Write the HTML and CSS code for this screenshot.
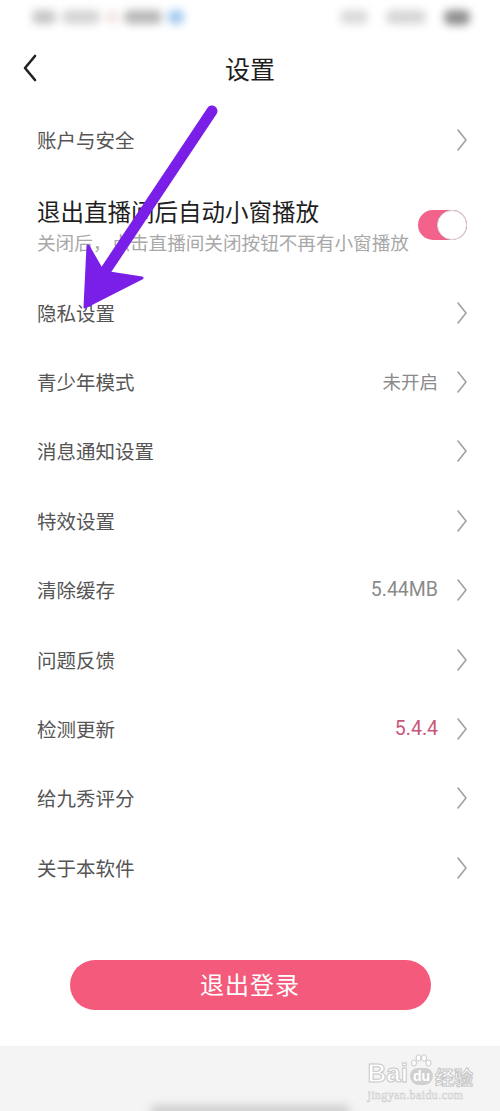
FILE: index.html
```html
<!DOCTYPE html>
<html lang="zh">
<head>
<meta charset="utf-8">
<link rel="stylesheet" href="styles.css">
</head>
<body>
<div class="screen">
  <div class="status">
    <div class="blobs left">
      <span class="b b1"></span><span class="b b2"></span><span class="b b3"></span><span class="b b4"></span><span class="b b5"></span>
    </div>
    <div class="blobs right">
      <span class="b b6"></span><span class="b b7"></span><span class="b b8"></span>
    </div>
  </div>
  <header class="header">
    <svg class="back" width="18" height="28" viewBox="0 0 18 28"><path d="M14 2 L4 14 L14 26" fill="none" stroke="#222" stroke-width="2.6" stroke-linecap="round" stroke-linejoin="round"/></svg>
    <h1 class="title">设置</h1>
  </header>

  <div class="list">
    <div class="row"><span class="label">账户与安全</span><span class="right"><svg class="chev" viewBox="0 0 12 22"><path d="M2 1 L10 11 L2 21" /></svg></span></div>
    <div class="row toggle-row">
      <div class="tcol">
        <span class="ttitle">退出直播间后自动小窗播放</span>
        <span class="tsub">关闭后，点击直播间关闭按钮不再有小窗播放</span>
      </div>
      <span class="switch"><span class="knob"></span></span>
    </div>
    <div class="row"><span class="label">隐私设置</span><span class="right"><svg class="chev" viewBox="0 0 12 22"><path d="M2 1 L10 11 L2 21" /></svg></span></div>
    <div class="row"><span class="label">青少年模式</span><span class="right"><span class="val">未开启</span><svg class="chev" viewBox="0 0 12 22"><path d="M2 1 L10 11 L2 21" /></svg></span></div>
    <div class="row"><span class="label">消息通知设置</span><span class="right"><svg class="chev" viewBox="0 0 12 22"><path d="M2 1 L10 11 L2 21" /></svg></span></div>
    <div class="row"><span class="label">特效设置</span><span class="right"><svg class="chev" viewBox="0 0 12 22"><path d="M2 1 L10 11 L2 21" /></svg></span></div>
    <div class="row"><span class="label">清除缓存</span><span class="right"><span class="val num">5.44MB</span><svg class="chev" viewBox="0 0 12 22"><path d="M2 1 L10 11 L2 21" /></svg></span></div>
    <div class="row"><span class="label">问题反馈</span><span class="right"><svg class="chev" viewBox="0 0 12 22"><path d="M2 1 L10 11 L2 21" /></svg></span></div>
    <div class="row"><span class="label">检测更新</span><span class="right"><span class="val num pink">5.4.4</span><svg class="chev" viewBox="0 0 12 22"><path d="M2 1 L10 11 L2 21" /></svg></span></div>
    <div class="row"><span class="label">给九秀评分</span><span class="right"><svg class="chev" viewBox="0 0 12 22"><path d="M2 1 L10 11 L2 21" /></svg></span></div>
    <div class="row"><span class="label">关于本软件</span><span class="right"><svg class="chev" viewBox="0 0 12 22"><path d="M2 1 L10 11 L2 21" /></svg></span></div>
  </div>

  <div class="btn-wrap"><button class="logout">退出登录</button></div>

  <footer class="footer">
    <div class="watermark">
      <div class="wm-top"><span class="wm-bai">Bai</span><span class="wm-du"><svg class="paw" width="22" height="14" viewBox="0 0 22 14"><ellipse cx="4" cy="9" rx="2.5" ry="3" /><ellipse cx="8.5" cy="4" rx="2.5" ry="3.2" /><ellipse cx="14" cy="4" rx="2.5" ry="3.2" /><ellipse cx="18.5" cy="9" rx="2.5" ry="3" /></svg><span class="du">du</span></span><span class="wm-jy">经验</span></div>
      <div class="wm-url">jingyan.baidu.com</div>
    </div>
    <div class="homebar"></div>
  </footer>

  <svg class="arrow" width="500" height="1111" viewBox="0 0 500 1111">
    <line x1="212" y1="111" x2="102" y2="276" stroke="#7a1fe8" stroke-width="11" stroke-linecap="round"/>
    <polygon points="85,307 88,246 103,272 142,278" fill="#7a1fe8" stroke="#7a1fe8" stroke-width="3" stroke-linejoin="round"/>
  </svg>
</div>
</body>
</html>
```

FILE: styles.css
```css
* { box-sizing: border-box; }
html, body { margin: 0; padding: 0; }
body {
  background: #fff;
  font-family: "Noto Sans CJK SC", "Noto Sans", sans-serif;
  color: #333;
}
.screen {
  position: relative;
  width: 500px;
  height: 1111px;
  overflow: hidden;
  background: #fff;
  display: flex;
  flex-direction: column;
}
.status {
  height: 40px;
  display: flex;
  justify-content: space-between;
  align-items: center;
  padding: 0 30px 6px 32px;
}
.blobs { display: flex; align-items: center; gap: 6px; filter: blur(4px); }
.b { display: block; height: 14px; border-radius: 6px; background: #c8c8c8; }
.b1 { width: 24px; background: #c6c6c6; }
.b2 { width: 38px; background: #d4d4d4; }
.b3 { width: 12px; background: #f2e2e2; }
.b4 { width: 38px; background: #b8b8b8; }
.b5 { width: 16px; background: #9fc8f0; }
.b6 { width: 28px; background: #dadada; }
.b7 { width: 40px; background: #d6d6d6; }
.b8 { width: 26px; height: 15px; background: #8f8f8f; }

.header {
  height: 65px;
  display: flex;
  align-items: center;
  justify-content: center;
  position: relative;
}
.back { position: absolute; left: 21px; top: 14px; }
.title {
  margin: 0;
  font-size: 25px;
  font-weight: 400;
  color: #1e1e1e;
  line-height: 1;
  margin-top: -8px;
}
.list { display: flex; flex-direction: column; }
.row {
  height: 69.4px;
  display: flex;
  align-items: center;
  justify-content: space-between;
  padding: 0 32px 0 37px;
}
.label { font-size: 19.5px; color: #555; }
.right { display: flex; align-items: center; gap: 18px; }
.val { font-size: 18.5px; color: #8a8a8a; }
.num { font-family: "Roboto", "Liberation Sans", sans-serif; font-size: 19.5px; }
.pink { color: #c8557a; }
.chev { width: 12px; height: 22px; display: block; margin-top: 1px; }
.chev path { fill: none; stroke: #a0a0a0; stroke-width: 1.6; stroke-linecap: round; stroke-linejoin: round; }

.toggle-row { height: 103px; padding-right: 33px; }
.tcol { display: flex; flex-direction: column; gap: 6px; margin-top: -2px; }
.ttitle { font-size: 23.5px; color: #1f1f1f; line-height: 28px; }
.tsub { font-size: 18.6px; color: #a8a8a8; line-height: 22px; }
.switch {
  width: 49px;
  height: 30px;
  border-radius: 15px;
  background: #f2628a;
  position: relative;
  display: block;
  margin-top: -2px;
}
.knob {
  position: absolute;
  right: 0;
  top: 0;
  width: 30px;
  height: 30px;
  border-radius: 50%;
  background: #fff;
  border: 1px solid #d8d8d8;
  box-shadow: 0 0 1px rgba(0,0,0,0.15);
}

.btn-wrap {
  display: flex;
  justify-content: center;
  padding-top: 58px;
}
.logout {
  width: 361px;
  height: 50px;
  border: none;
  border-radius: 25px;
  background: #f45a7c;
  color: #fff;
  font-family: "Noto Sans CJK SC", sans-serif;
  font-size: 24px;
  letter-spacing: 1px;
  padding: 0 0 2px;
}
.footer {
  margin-top: auto;
  height: 65px;
  background: #f4f4f4;
  position: relative;
}
.watermark {
  position: absolute;
  right: 27px;
  top: 8px;
  display: flex;
  flex-direction: column;
  align-items: flex-start;
}
.wm-top { display: flex; align-items: flex-end; font-family: "Liberation Sans", sans-serif; font-weight: 700; }
.wm-bai {
  font-size: 26px;
  color: #fff;
  -webkit-text-stroke: 1px #c8c8c8;
  line-height: 1;
}
.wm-du {
  display: flex;
  flex-direction: column;
  align-items: center;
  margin: 0 2px 1px;
}
.paw { display: block; fill: #fff; stroke: #c8c8c8; stroke-width: 1; }
.du {
  font-size: 14px;
  color: #fff;
  background: #d0d0d0;
  border-radius: 9px 9px 10px 10px;
  padding: 0 3px;
  line-height: 17px;
}
.wm-jy {
  font-family: "Noto Sans CJK SC", sans-serif;
  font-size: 19px;
  color: #fff;
  -webkit-text-stroke: 1px #c4c4c4;
  line-height: 1;
}
.wm-url {
  font-family: "Liberation Serif", serif;
  font-size: 12px;
  color: #fff;
  -webkit-text-stroke: 0.6px #cfcfcf;
  margin-top: 2px;
  letter-spacing: 0.4px;
}
.homebar {
  position: absolute;
  left: 150px;
  bottom: -6px;
  width: 200px;
  height: 12px;
  border-radius: 6px;
  background: #cfcfcf;
  filter: blur(4px);
}
.arrow { position: absolute; left: 0; top: 0; pointer-events: none; }
```
